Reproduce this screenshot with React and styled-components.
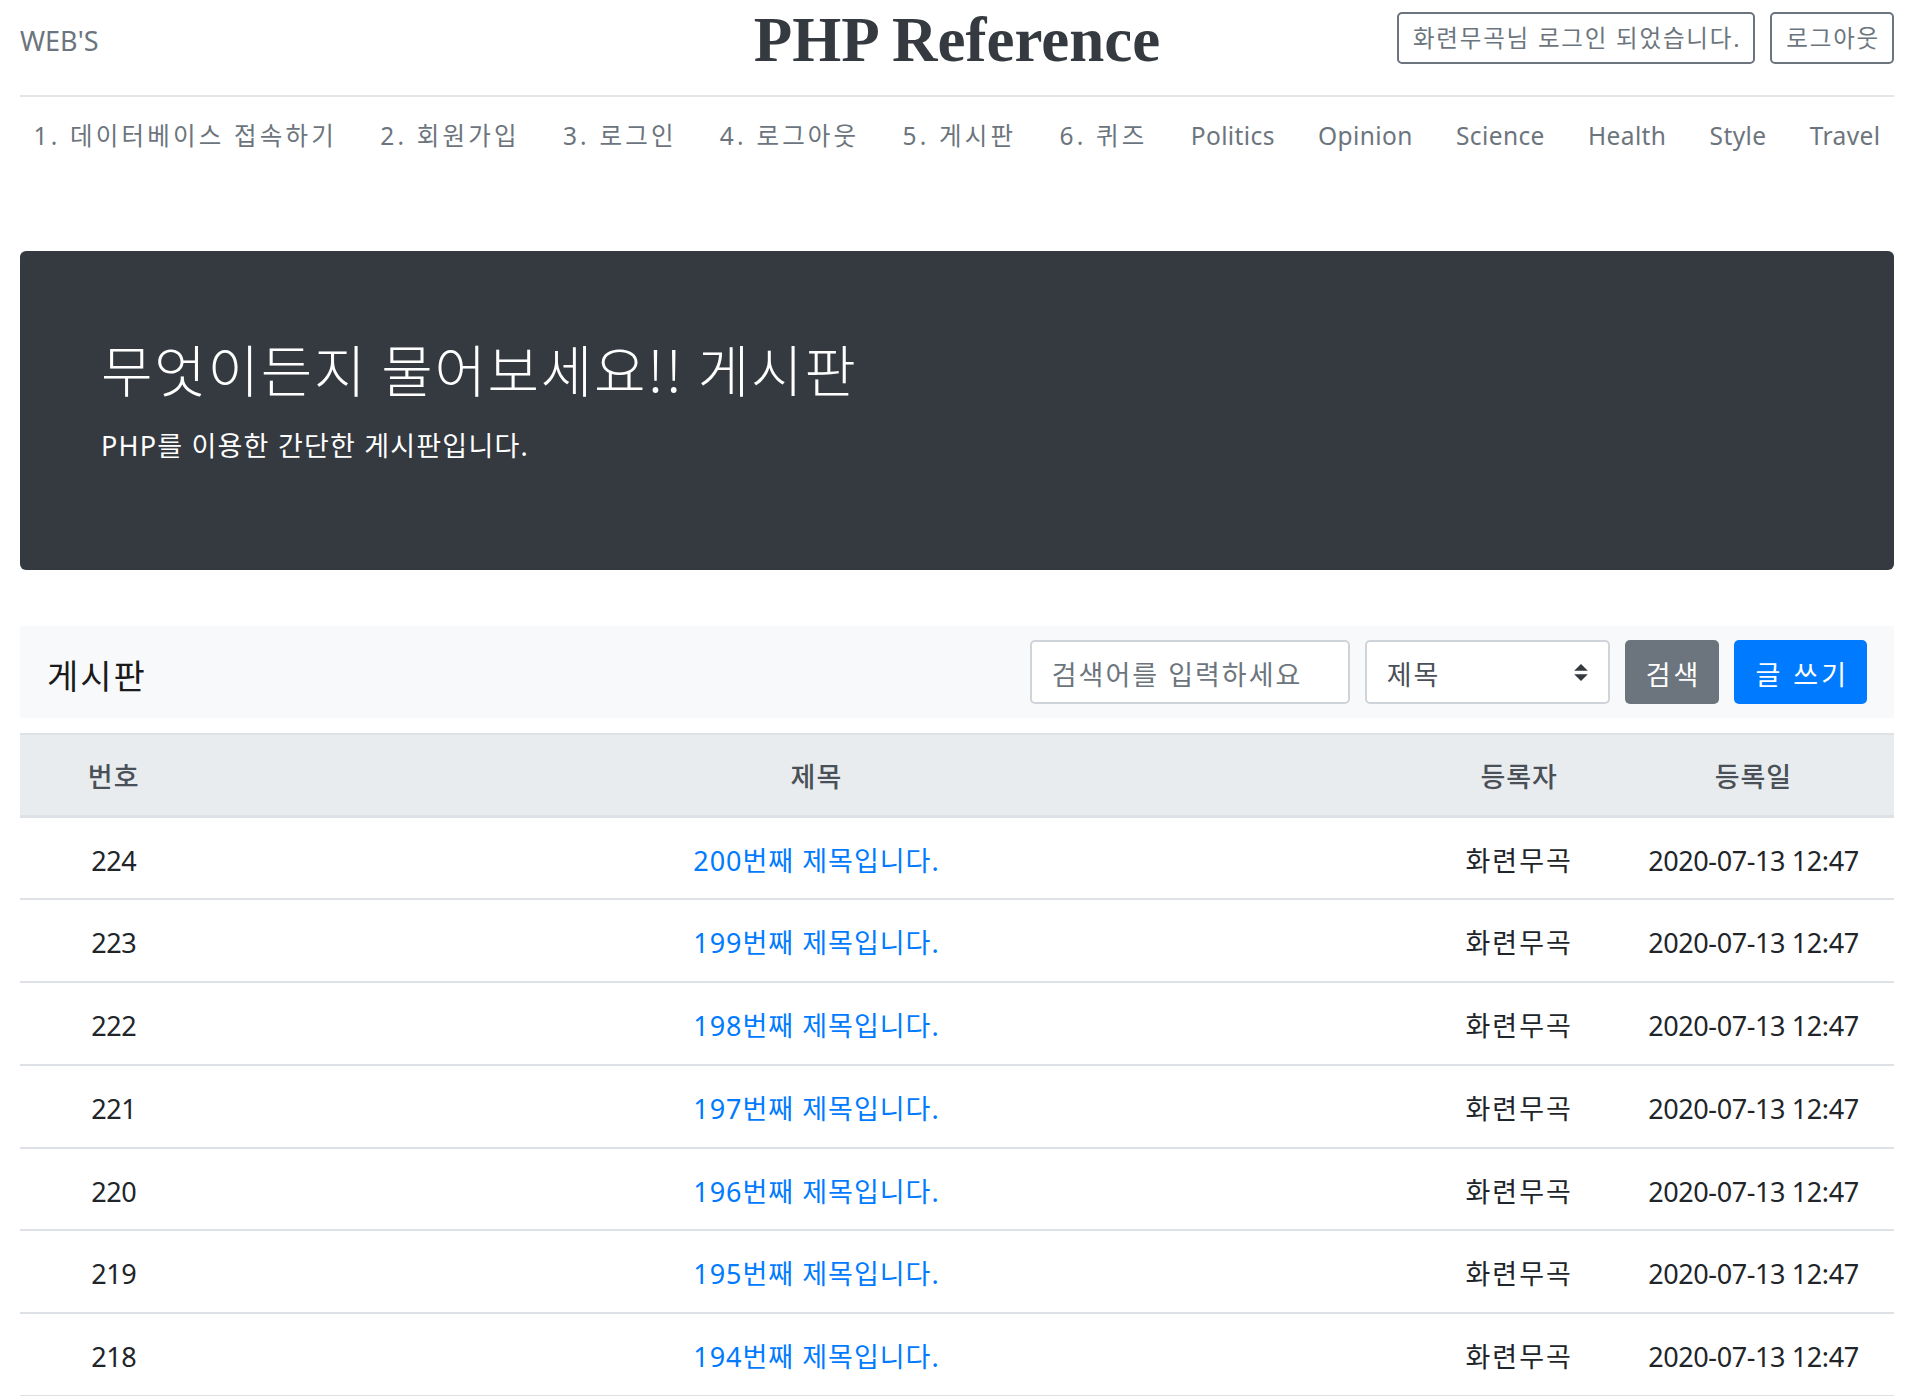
import styled, { createGlobalStyle } from 'styled-components';

const GlobalStyle = createGlobalStyle`
  body {
    margin: 0;
    background: #fff;
    color: #212529;
    font-family: "Noto Sans", "Noto Sans CJK KR", sans-serif;
  }
  * {
    box-sizing: border-box;
  }
`;

const posts = Array.from({ length: 10 }, (_, i) => ({
  id: 224 - i,
  title: `${200 - i}번째 제목입니다.`,
  author: '화련무곡',
  date: '2020-07-13 12:47',
}));

// korean items get extra tracking (the original font is wider)
const menu = [
  { label: '1. 데이터베이스 접속하기', ko: true },
  { label: '2. 회원가입', ko: true },
  { label: '3. 로그인', ko: true },
  { label: '4. 로그아웃', ko: true },
  { label: '5. 게시판', ko: true },
  { label: '6. 퀴즈', ko: true },
  { label: 'Politics' },
  { label: 'Opinion' },
  { label: 'Science' },
  { label: 'Health' },
  { label: 'Style' },
  { label: 'Travel' },
];

export default function App() {
  return (
    <>
      <GlobalStyle />
      <Page>
        <Header>
          <Brand href="#">WEB'S</Brand>
          <Logo href="#">PHP Reference</Logo>
          <UserBox>
            <OutlineButton>화련무곡님 로그인 되었습니다.</OutlineButton>
            <OutlineButton>로그아웃</OutlineButton>
          </UserBox>
        </Header>

        <Nav>
          {menu.map((item) => (
            <NavLink key={item.label} href="#" $ko={item.ko}>
              {item.label}
            </NavLink>
          ))}
        </Nav>

        <Jumbotron>
          <h1>무엇이든지 물어보세요!! 게시판</h1>
          <p>PHP를 이용한 간단한 게시판입니다.</p>
        </Jumbotron>

        <BoardBar>
          <BoardTitle>게시판</BoardTitle>
          <SearchForm>
            <SearchInput placeholder="검색어를 입력하세요" />
            <SelectBox>
              <span>제목</span>
              <svg width="14" height="17" viewBox="0 0 4 5">
                <path fill="#343a40" d="M2 0L0 2h4zm0 5L0 3h4z" />
              </svg>
            </SelectBox>
            <Button $variant="secondary">검색</Button>
            <Button $variant="primary">글 쓰기</Button>
          </SearchForm>
        </BoardBar>

        <Table>
          <colgroup>
            <col style={{ width: '10%' }} />
            <col style={{ width: '65%' }} />
            <col style={{ width: '10%' }} />
            <col style={{ width: '15%' }} />
          </colgroup>
          <thead>
            <tr>
              <HeadCell>번호</HeadCell>
              <HeadCell>제목</HeadCell>
              <HeadCell>등록자</HeadCell>
              <HeadCell>등록일</HeadCell>
            </tr>
          </thead>
          <tbody>
            {posts.map((post) => (
              <tr key={post.id}>
                <Cell $tracking={-0.4}>{post.id}</Cell>
                <Cell $tracking={1}>
                  <PostLink href="#">{post.title}</PostLink>
                </Cell>
                <Cell $tracking={2}>{post.author}</Cell>
                <Cell $tracking={-0.4}>{post.date}</Cell>
              </tr>
            ))}
          </tbody>
        </Table>
      </Page>
    </>
  );
}

const Page = styled.div`
  padding: 0 14px 40px 20px;
`;

const Header = styled.header`
  display: grid;
  grid-template-columns: 1fr auto 1fr;
  align-items: center;
  height: 97px;
  padding-bottom: 20px;
  border-bottom: 2px solid #e5e5e5;
`;

const Brand = styled.a`
  font-size: 27px;
  color: #6c757d;
  text-decoration: none;
  line-height: 1;
  padding-top: 6px;
`;

const Logo = styled.a`
  font-family: "Liberation Serif", serif;
  font-weight: 700;
  font-size: 63px;
  line-height: 1;
  color: #343a40;
  text-decoration: none;
  padding-top: 6px;
`;

const UserBox = styled.div`
  display: flex;
  justify-content: flex-end;
  gap: 15px;
`;

const OutlineButton = styled.button`
  font-family: inherit;
  font-size: 23.5px;
  letter-spacing: 1.8px;
  line-height: 35px;
  height: 52px;
  padding: 2px 12px 0 14px;
  color: #6c757d;
  background: #fff;
  border: 2px solid #6c757d;
  border-radius: 5px;
`;

const Nav = styled.nav`
  display: flex;
  justify-content: space-between;
  padding-top: 8px;
`;

const NavLink = styled.a`
  padding: 13px 13.5px;
  font-size: 24.5px;
  line-height: 36px;
  letter-spacing: ${(p) => (p.$ko ? '3.2px' : '0.4px')};
  color: #6c757d;
  text-decoration: none;
  white-space: nowrap;
`;

const Jumbotron = styled.section`
  margin-top: 84px;
  height: 319px;
  padding: 81px;
  background: #343a40;
  border-radius: 6px;
  color: #fff;

  h1 {
    margin: 0;
    font-family: "Noto Sans CJK KR", serif;
    font-weight: 300;
    font-size: 56px;
    line-height: 71px;
    letter-spacing: 1.7px;
  }

  p {
    margin: 24px 0 0;
    font-size: 27px;
    line-height: 38px;
    letter-spacing: 1.2px;
  }
`;

const BoardBar = styled.div`
  display: flex;
  align-items: center;
  justify-content: space-between;
  margin-top: 56px;
  height: 92px;
  padding: 0 27px;
  background: #f8f9fa;
`;

const BoardTitle = styled.span`
  padding-top: 4px;
  font-size: 34px;
  letter-spacing: 2px;
  color: #1a1a1a;
`;

const SearchForm = styled.form`
  display: flex;
  align-items: center;
  gap: 15px;
`;

const SearchInput = styled.input`
  width: 320px;
  height: 64px;
  padding: 4px 18px 0 20px;
  font-family: inherit;
  font-size: 27px;
  letter-spacing: 2px;
  color: #495057;
  background: #fff;
  border: 2px solid #ced4da;
  border-radius: 5px;
  outline: none;

  &::placeholder {
    color: #6c757d;
  }
`;

const SelectBox = styled.div`
  display: flex;
  align-items: center;
  justify-content: space-between;
  width: 245px;
  height: 64px;
  padding: 3px 20px 0;
  font-size: 27px;
  letter-spacing: 2px;
  color: #495057;
  background: #fff;
  border: 2px solid #ced4da;
  border-radius: 5px;

  svg {
    margin-top: -3px;
  }
`;

const Button = styled.button`
  height: 64px;
  padding: 3px 18px 0 21px;
  font-family: inherit;
  font-size: 27px;
  letter-spacing: 3px;
  color: #fff;
  border: none;
  border-radius: 5px;
  background: ${(p) => (p.$variant === 'primary' ? '#007bff' : '#6c757d')};
`;

const Table = styled.table`
  width: 100%;
  margin-top: 15px;
  table-layout: fixed;
  border-collapse: separate;
  border-spacing: 0;
  font-size: 27px;
`;

const HeadCell = styled.th`
  padding: 22px 20px 17px;
  line-height: 40.7px;
  font-weight: 500;
  letter-spacing: 1px;
  color: #495057;
  background: #e9ecef;
  border-top: 2px solid #dee2e6;
  border-bottom: 3px solid #dee2e6;
  text-align: center;
`;

const Cell = styled.td`
  padding: 23px 20px 17px;
  line-height: 40.7px;
  letter-spacing: ${(p) => p.$tracking}px;
  text-align: center;
  color: #212529;
  border-bottom: 2px solid #dee2e6;
`;

const PostLink = styled.a`
  color: #007bff;
  text-decoration: none;
`;
